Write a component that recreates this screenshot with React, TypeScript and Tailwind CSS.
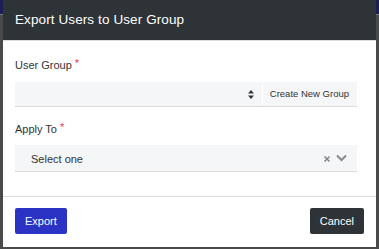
import React from "react";

export default function App() {
  return (
    <div className="relative w-[379px] h-[249px] bg-[#4a4a4a] overflow-hidden" style={{ fontFamily: '"Liberation Sans", Arial, sans-serif' }}>
      <div className="absolute left-0 top-0 w-full h-[14px] bg-[#1c1f55]" />
      <div className="absolute left-0 top-[14px] w-full h-[1px] bg-[#777]" />
      <div className="relative ml-[3px] w-[373px] h-[247px] bg-white flex flex-col">
        <div className="h-[41px] bg-[#2e3338] flex items-center px-[12px] border-b border-[#dcdcdc]">
          <span className="text-white text-[13.5px] tracking-[0.1px]">Export Users to User Group</span>
        </div>
        <div className="pl-[12px] pr-[19px] pt-[17px] flex flex-col">
          <div className="text-[11px] text-[#333] leading-[14px] flex">
            User Group<span className="text-[#e8384f] ml-[3px] text-[11px] leading-[10px]">*</span>
          </div>
          <div className="mt-[10px] h-[25px] bg-[#f5f6f8] border-b border-[#dcdcdc] flex items-center">
            <div className="flex-1" />
            <svg width="6" height="9" viewBox="0 0 6 9" className="mr-[8px]">
              <path d="M3 0 L6 3.5 H0 Z" fill="#333" />
              <path d="M3 9 L6 5.5 H0 Z" fill="#333" />
            </svg>
            <div className="w-[1px] h-full bg-white" />
            <span className="pl-[7px] pr-[8px] text-[9.5px] text-[#333]">Create New Group</span>
          </div>
          <div className="mt-[15px] text-[11px] text-[#333] leading-[14px] flex">
            Apply To<span className="text-[#e8384f] ml-[3px] text-[11px] leading-[10px]">*</span>
          </div>
          <div className="mt-[9px] h-[27px] bg-[#f5f6f8] border-b border-[#dcdcdc] flex items-center pl-[16px] pr-[10px]">
            <span className="flex-1 text-[11px] text-[#333] pt-[2px]">Select one</span>
            <svg width="8" height="8" viewBox="0 0 8 8" className="mr-[5px] mt-[2px]">
              <path d="M1.5 1.5 L6.5 6.5 M6.5 1.5 L1.5 6.5" stroke="#888" strokeWidth="1.6" />
            </svg>
            <svg width="11" height="8" viewBox="0 0 11 8">
              <path d="M1 1.5 L5.5 6 L10 1.5" stroke="#888" strokeWidth="2" fill="none" />
            </svg>
          </div>
        </div>
        <div className="mt-[24px] border-t border-[#dcdcdc] flex justify-between items-center px-[12px] pt-[11px]">
          <button className="h-[26px] px-[10px] bg-[#2b33c4] text-white text-[11px] rounded-[2px]">Export</button>
          <button className="h-[26px] px-[10px] bg-[#2e3338] text-white text-[11px] rounded-[2px]">Cancel</button>
        </div>
      </div>
    </div>
  );
}
